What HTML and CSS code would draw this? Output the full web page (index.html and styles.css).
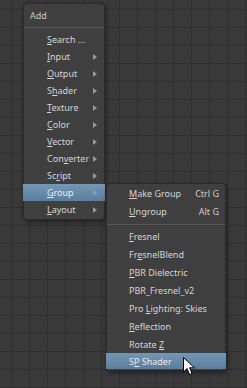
FILE: index.html
```html
<!DOCTYPE html>
<html lang="en">
<head>
    <meta charset="UTF-8">
    <title>Add Node</title>
    <link rel="stylesheet" href="styles.css">
</head>
<body>
    <div class="canvas">

        <!-- Add menu -->
        <div class="menu main-menu">
            <div class="menu-title">Add</div>
            <div class="sep"></div>
            <div class="item"><span class="label"><u>S</u>earch ...</span></div>
            <div class="item"><span class="label"><u>I</u>nput</span><span class="arrow"></span></div>
            <div class="item"><span class="label"><u>O</u>utput</span><span class="arrow"></span></div>
            <div class="item"><span class="label">S<u>h</u>ader</span><span class="arrow"></span></div>
            <div class="item"><span class="label"><u>T</u>exture</span><span class="arrow"></span></div>
            <div class="item"><span class="label"><u>C</u>olor</span><span class="arrow"></span></div>
            <div class="item"><span class="label"><u>V</u>ector</span><span class="arrow"></span></div>
            <div class="item"><span class="label">Con<u>v</u>erter</span><span class="arrow"></span></div>
            <div class="item"><span class="label">Sc<u>r</u>ipt</span><span class="arrow"></span></div>
            <div class="item active"><span class="label"><u>G</u>roup</span><span class="arrow"></span></div>
            <div class="item"><span class="label"><u>L</u>ayout</span><span class="arrow"></span></div>
        </div>

        <!-- Group submenu -->
        <div class="menu sub-menu">
            <div class="item"><span class="label"><u>M</u>ake Group</span><span class="key">Ctrl G</span></div>
            <div class="item"><span class="label"><u>U</u>ngroup</span><span class="key">Alt G</span></div>
            <div class="sep"></div>
            <div class="item"><span class="label"><u>F</u>resnel</span></div>
            <div class="item"><span class="label">Fr<u>e</u>snelBlend</span></div>
            <div class="item"><span class="label"><u>P</u>BR Dielectric</span></div>
            <div class="item"><span class="label">PBR_Fresnel_v2</span></div>
            <div class="item"><span class="label">Pro <u>L</u>ighting: Skies</span></div>
            <div class="item"><span class="label"><u>R</u>eflection</span></div>
            <div class="item"><span class="label">Rotate <u>Z</u></span></div>
            <div class="item active"><span class="label">S<u>P</u> Shader</span></div>
        </div>

        <svg class="cursor" width="14" height="21" viewBox="0 0 14 21">
            <path d="M1.5 1.5 L1.5 16 L5 12.5 L7.5 18.5 L10 17.5 L7.6 11.8 L12.5 11.8 Z" fill="#fff" stroke="#000" stroke-width="1" stroke-linejoin="round"/>
        </svg>
    </div>
</body>
</html>
```

FILE: styles.css
```css
/* General */
body {
    margin: 0;
    padding: 0;
    font-family: 'Noto Sans', 'DejaVu Sans', sans-serif;
    font-size: 9px;
    color: #d6d6d6;
}

/* Node editor grid */
.canvas {
    position: relative;
    width: 247px;
    height: 388px;
    overflow: hidden;
    background-color: #393939;
    background-image:
        linear-gradient(to right, #2f2f2f 1px, transparent 1px),
        linear-gradient(to bottom, #2f2f2f 1px, transparent 1px);
    background-size: 18px 18px;
    background-position: 11px 9px;
}

/* Menus */
.menu {
    position: absolute;
    box-sizing: border-box;
    background-color: #3f3f3f;
    border: 1px solid #2a2a2a;
    border-radius: 4px;
    box-shadow: 1px 2px 4px rgba(0, 0, 0, 0.45);
}

.main-menu {
    left: 23px;
    top: 3px;
    width: 82px;
    height: 217px;
    padding-bottom: 4px;
}

.sub-menu {
    left: 106px;
    top: 183px;
    width: 120px;
    height: 188px;
}

.menu-title {
    height: 23px;
    line-height: 23px;
    padding-left: 6px;
    color: #cccccc;
}

.sep {
    height: 1px;
    background-color: #555555;
    margin: 0 0 3px;
}

.item {
    display: flex;
    align-items: center;
    height: 17px;
    padding-left: 23px;
    padding-right: 6px;
}

.sub-menu .item {
    height: 18px;
    padding-left: 22px;
    padding-right: 6px;
}

.sub-menu .sep {
    margin: 4px 0 2px;
}

.item u {
    text-decoration-thickness: 1px;
    text-underline-offset: 1px;
}

.label {
    flex: 1;
    white-space: nowrap;
}

.key {
    color: #cfcfcf;
}

.arrow {
    width: 0;
    height: 0;
    border-top: 3px solid transparent;
    border-bottom: 3px solid transparent;
    border-left: 4px solid #9a9a9a;
    margin-right: 1px;
}

.item.active {
    background: linear-gradient(to bottom, #7397b5, #5a7e9d);
    color: #ececec;
}

.main-menu .item.active {
    margin: 0 -1px;
    padding-left: 24px;
    padding-right: 7px;
}

.sub-menu .item.active {
    margin: 0 -1px;
    padding-left: 23px;
    height: 16px;
}

/* Mouse pointer */
.cursor {
    position: absolute;
    left: 182px;
    top: 356px;
}
```
